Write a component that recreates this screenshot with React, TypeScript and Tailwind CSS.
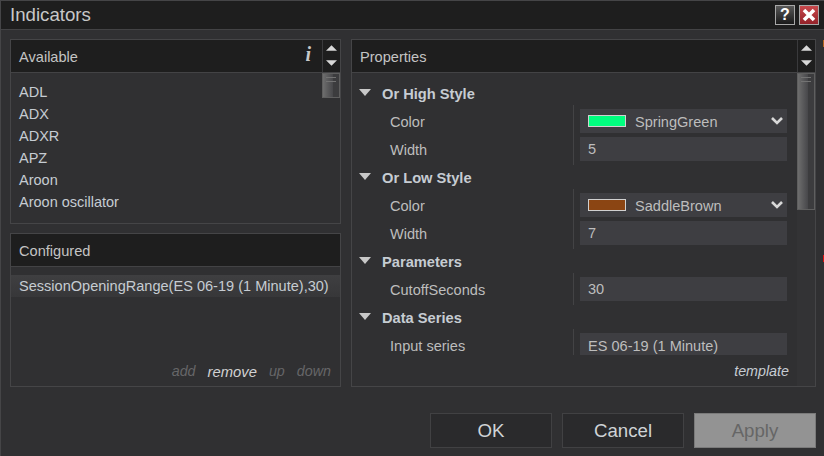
const FONT = "font-['Liberation_Sans',Arial,sans-serif]"

function Tri({ down = false, className = "" }: { down?: boolean; className?: string }) {
  return (
    <svg width="12" height="6" viewBox="0 0 12 6" className={className}>
      <path d={down ? "M0,0 H12 L6,6 Z" : "M6,0 L12,6 H0 Z"} fill="#d8d8d8" />
    </svg>
  )
}

function UpDown() {
  return (
    <div className="w-[18px] shrink-0 border-l border-[#3a3a3c] flex flex-col items-center pt-[5px] gap-[9px]">
      <Tri className="w-[11px]" />
      <Tri down className="w-[11px]" />
    </div>
  )
}

function Thumb({ height }: { height: string }) {
  return (
    <div className={`${height} relative border border-[#5f5f5f] flex`}>
      <div className="flex-1 bg-gradient-to-r from-[#6e6e6e] to-[#47474a]" />
      <div className="w-[6px] bg-[#3c3c3e]" />
      <div className="absolute left-[3px] right-[3px] top-[3px] h-px bg-[#737373]" />
      <div className="absolute left-[3px] right-[3px] top-[7px] h-px bg-[#737373]" />
    </div>
  )
}

function PanelHeader({ title, extra }: { title: string; extra?: React.ReactNode }) {
  return (
    <div className="h-[33px] shrink-0 flex bg-[#1e1e1e] border-b border-[#434345]">
      <div className="flex-1 flex items-center pl-[8px] pr-[11px] pt-[3px] justify-between text-[14.6px] text-[#c4c4c4]">
        <span>{title}</span>
        {extra}
      </div>
    </div>
  )
}

function Group({ title }: { title: string }) {
  return (
    <div className="h-[24px] flex items-center pt-[2px] text-[14.67px] font-bold text-[#c6ccd2]">
      <svg width="12" height="7" viewBox="0 0 12 7" className="ml-[7px] mr-[11px] -mt-[4px]">
        <path d="M0,0 H12 L6,7 Z" fill="#c8c8c8" />
      </svg>
      <span>{title}</span>
    </div>
  )
}

function Rows({ children }: { children: React.ReactNode }) {
  return <div className="flex flex-col gap-[4px] py-[4px]">{children}</div>
}

function Row({ label, children }: { label: string; children: React.ReactNode }) {
  return (
    <div className="h-[24px] flex items-center text-[14.55px] text-[#bdbdbd]">
      <span className="w-[228px] shrink-0 pl-[38px] pt-[3px]">{label}</span>
      <div className="w-[207px] h-[24px] flex items-center bg-[#3e3e42] pl-[8px] pr-[4px] pt-[2px]">
        {children}
      </div>
    </div>
  )
}

function ColorValue({ color, name }: { color: string; name: string }) {
  return (
    <>
      <span className="w-[38px] h-[12px] border border-[#d0d0d0] mr-[9px] -mt-[2px]" style={{ background: color }} />
      <span className="flex-1 pt-[2px]">{name}</span>
      <svg width="12" height="8" viewBox="0 0 12 8" className="-mt-[2px]">
        <path d="M1,1 L6,6 L11,1" fill="none" stroke="#d8d8d8" strokeWidth="2.6" />
      </svg>
    </>
  )
}

function DialogButton({ label, disabled = false }: { label: string; disabled?: boolean }) {
  return (
    <button
      className={
        disabled
          ? "w-[122px] h-[35px] text-[18.67px] bg-[#939393] border border-[#7a7a7a] text-[#666666]"
          : "w-[122px] h-[35px] text-[18.67px] bg-[#2a2a2c] border border-[#414143] text-[#cfd3d6]"
      }
    >
      {label}
    </button>
  )
}

export default function App() {
  return (
    <div className={`${FONT} relative w-[824px] h-[456px] overflow-hidden bg-[#303032] border-t border-l border-[#454547] flex flex-col`}>
      {/* title bar */}
      <div className="h-[29px] shrink-0 bg-[#1e1e1e] border-b border-[#434345] flex items-center pl-[9px] pr-[5px]">
        <span className="flex-1 text-[18.67px] text-[#c8c8c8] -mt-[1px]">Indicators</span>
        <div className="w-[20px] h-[20px] border border-[#a8a8a8] bg-gradient-to-b from-[#5a5a5a] to-[#1a1a1a] flex items-center justify-center text-[16px] font-bold text-white leading-none">
          ?
        </div>
        <div className="ml-[4px] w-[20px] h-[20px] border border-[#a8a8a8] bg-gradient-to-b from-[#c8484c] to-[#94222a] flex items-center justify-center">
          <svg width="14" height="14" viewBox="0 0 14 14">
            <path d="M2,2 L12,12 M12,2 L2,12" stroke="#ffffff" strokeWidth="3.6" />
          </svg>
        </div>
      </div>

      <div className="flex-1 flex pl-[9px] pt-[9px] gap-[10px]">
        {/* left column */}
        <div className="w-[331px] shrink-0 flex flex-col gap-[9px]">
          <div className="h-[185px] border border-[#454547] flex flex-col">
            <div className="h-[33px] shrink-0 flex bg-[#1e1e1e] border-b border-[#434345]">
              <div className="flex-1 flex items-center justify-between pl-[8px] pr-[11px] pt-[3px] text-[14.6px] text-[#c4c4c4]">
                <span>Available</span>
                <span className="font-['Liberation_Serif',serif] italic font-bold text-[20px] text-[#c8c8c8] leading-none -mt-[7px]">i</span>
              </div>
              <UpDown />
            </div>
            <div className="flex-1 flex overflow-hidden">
              <div className="flex-1 pt-[8px] pl-[8px] text-[14.5px] text-[#c6ccd2]">
                {["ADL", "ADX", "ADXR", "APZ", "Aroon", "Aroon oscillator"].map((item) => (
                  <div key={item} className="h-[22px] leading-[22px]">{item}</div>
                ))}
              </div>
              <div className="w-[18px] shrink-0">
                <Thumb height="h-[25px]" />
              </div>
            </div>
          </div>

          <div className="h-[154px] border border-[#454547] flex flex-col">
            <PanelHeader title="Configured" />
            <div className="flex-1 pt-[8px]">
              <div className="h-[22px] flex items-center pl-[8px] pt-[2px] bg-gradient-to-b from-[#3f3f41] to-[#373739] text-[14.56px] text-[#c6ccd2] whitespace-nowrap">
                SessionOpeningRange(ES 06-19 (1 Minute),30)
              </div>
            </div>
            <div className="h-[30px] shrink-0 flex items-center justify-end gap-[12px] pr-[9px] pt-[2px] text-[14.3px] italic text-[#666668]">
              <span>add</span>
              <span className="text-[14.8px] text-[#d2d2d2]">remove</span>
              <span>up</span>
              <span>down</span>
            </div>
          </div>
        </div>

        {/* right column */}
        <div className="w-[465px] shrink-0 h-[348px] border border-[#454547] flex flex-col">
          <div className="h-[33px] shrink-0 flex bg-[#1e1e1e] border-b border-[#434345]">
            <div className="flex-1 flex items-center pl-[8px] pt-[3px] text-[14.6px] text-[#c4c4c4]">Properties</div>
            <UpDown />
          </div>
          <div className="flex-1 flex min-h-0">
            <div className="flex-1 flex flex-col min-w-0">
              <div className="h-[282px] shrink-0 overflow-hidden pt-[8px] relative">
                <Group title="Or High Style" />
                <Rows>
                  <Row label="Color"><ColorValue color="#00ff7f" name="SpringGreen" /></Row>
                  <Row label="Width">5</Row>
                </Rows>
                <Group title="Or Low Style" />
                <Rows>
                  <Row label="Color"><ColorValue color="#8b4513" name="SaddleBrown" /></Row>
                  <Row label="Width">7</Row>
                </Rows>
                <Group title="Parameters" />
                <Rows>
                  <Row label="CutoffSeconds">30</Row>
                </Rows>
                <Group title="Data Series" />
                <Rows>
                  <Row label="Input series"><span className="pt-[2px]">ES 06-19 (1 Minute)</span></Row>
                </Rows>
                {/* column dividers */}
                <div className="absolute left-[221px] top-[32px] w-px h-[60px] bg-[#434345]" />
                <div className="absolute left-[221px] top-[116px] w-px h-[60px] bg-[#434345]" />
                <div className="absolute left-[221px] top-[200px] w-px h-[32px] bg-[#434345]" />
                <div className="absolute left-[221px] top-[256px] w-px h-[26px] bg-[#434345]" />
              </div>
              <div className="flex-1 flex items-center justify-end pr-[8px] pt-[2px] text-[14.3px] italic text-[#c6ccd2]">template</div>
            </div>
            <div className="w-[18px] shrink-0 bg-[#333335]">
              <Thumb height="h-[137px]" />
            </div>
          </div>
        </div>
      </div>

      {/* footer buttons */}
      <div className="h-[43px] shrink-0 flex justify-end gap-[10px] pr-[8px]">
        <DialogButton label="OK" />
        <DialogButton label="Cancel" />
        <DialogButton label="Apply" disabled />
      </div>

      {/* bits of the window behind the dialog */}
      <div className="absolute right-0 top-[39px] w-px h-[7px] bg-[#b5651d]" />
      <div className="absolute right-0 top-[254px] w-px h-[7px] bg-[#e01010]" />
    </div>
  )
}
